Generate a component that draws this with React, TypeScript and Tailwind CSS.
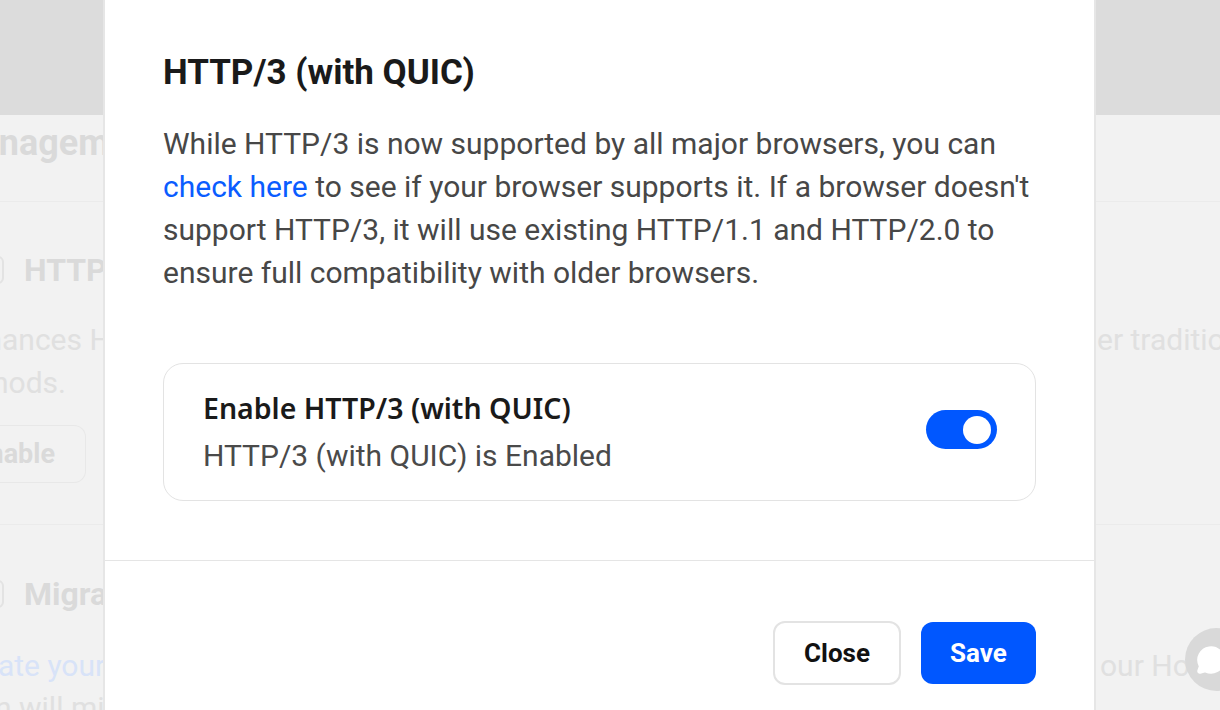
import { MessageCircle } from "lucide-react";

const roboto = "font-['Roboto',sans-serif]";

function BackgroundPage() {
  return (
    <div className={`${roboto} flex flex-col`}>
      <div className="h-[115px] bg-[#dcdcdc]" />
      <div className="h-[87px] border-b border-[#ebebeb] pt-[8px]">
        <div className="-ml-[52px] whitespace-nowrap text-[36px] font-bold leading-[40px] text-[#dadada]">
          Management
        </div>
      </div>

      <div className="border-b border-[#ebebeb] pb-[41px] pt-[48px]">
        <div className="flex h-[40px] items-center gap-[20px]">
          <div className="-ml-[24px] h-[28px] w-[28px] rounded-[6px] border-2 border-[#e3e3e3]" />
          <span className="whitespace-nowrap text-[32px] font-bold text-[#dadada]">HTTP/3</span>
        </div>
        <div className="mt-[28px] flex whitespace-nowrap text-[30px] leading-[43px] text-[#e0e0e0]">
          <span className="-ml-[47px]">enhances HTTP/3</span>
          <span className="ml-auto w-[123px] overflow-hidden">er traditional</span>
        </div>
        <div className="whitespace-nowrap text-[30px] leading-[43px] text-[#e0e0e0]">
          <span className="-ml-[60px] inline-block">methods.</span>
        </div>
        <div className="mt-[21px] flex h-[58px] w-[86px] items-center justify-end rounded-r-[12px] border border-l-0 border-[#e8e8e8] pr-[30px]">
          <span className="whitespace-nowrap text-[27px] font-bold text-[#dadada]">Enable</span>
        </div>
      </div>

      <div className="pt-[49px]">
        <div className="flex h-[40px] items-center gap-[20px]">
          <div className="-ml-[24px] h-[28px] w-[28px] rounded-[6px] border-2 border-[#e3e3e3]" />
          <span className="whitespace-nowrap text-[32px] font-bold text-[#dadada]">Migrate</span>
        </div>
        <div className="mt-[31px] flex whitespace-nowrap text-[30px] leading-[42px] text-[#d8e3f8]">
          <span className="-ml-[62px]">Migrate your site</span>
          <span className="ml-auto w-[120px] overflow-hidden text-[#e0e0e0]">our Hosting</span>
        </div>
        <div className="whitespace-nowrap text-[30px] leading-[42px] text-[#e0e0e0]">
          <span className="-ml-[5px] inline-block">n will migrate</span>
        </div>
      </div>

      <div className="absolute left-[1185px] top-[628px] flex h-[63px] w-[63px] items-center justify-center rounded-full bg-[#d9d9d9]">
        <MessageCircle className="h-[30px] w-[30px] -translate-x-[6px] fill-white text-white" />
      </div>
    </div>
  );
}

function Toggle() {
  return (
    <div className="mb-[5px] flex h-[39px] w-[71px] items-center justify-end rounded-full bg-[#0057ff] pr-[6px]">
      <div className="h-[28px] w-[28px] rounded-full bg-white" />
    </div>
  );
}

function Http3Modal() {
  return (
    <div className="flex h-full w-[993px] flex-col border-x-2 border-[#e6e6e6] bg-white">
      <div className="px-[58px] pb-[59px] pt-[53px]">
        <h2 className={`${roboto} text-[35px] font-bold leading-[40px] text-[#1a1a1a]`}>
          HTTP/3 (with QUIC)
        </h2>
        <p className={`${roboto} mt-[29px] whitespace-nowrap text-[30px] leading-[43px] text-[#474747]`}>
          While HTTP/3 is now supported by all major browsers, you can
          <br />
          <a href="#" className="text-[#0a5cff]">
            check here
          </a>{" "}
          to see if your browser supports it. If a browser doesn't
          <br />
          support HTTP/3, it will use existing HTTP/1.1 and HTTP/2.0 to
          <br />
          ensure full compatibility with older browsers.
        </p>

        <div className="mt-[69px] flex items-center justify-between rounded-[20px] border border-[#e3e3e3] py-[24px] pl-[39px] pr-[38px]">
          <div>
            <div className="font-['Noto_Sans',sans-serif] text-[28.5px] font-semibold leading-[40px] text-[#1a1a1a]">
              Enable HTTP/3 (with QUIC)
            </div>
            <div className={`${roboto} mt-[8px] text-[30px] leading-[40px] text-[#4a4a4a]`}>
              HTTP/3 (with QUIC) is Enabled
            </div>
          </div>
          <Toggle />
        </div>
      </div>

      <div className={`${roboto} flex justify-end gap-5 border-t border-[#e5e5e5] px-[58px] pt-[60px]`}>
        <button
          type="button"
          className="h-[64px] w-[128px] rounded-[12px] border-2 border-[#e3e3e3] bg-white text-[26px] font-bold text-[#111]"
        >
          Close
        </button>
        <button
          type="button"
          className="mt-[1px] h-[62px] w-[115px] rounded-[12px] bg-[#0057ff] text-[26px] font-bold text-white"
        >
          Save
        </button>
      </div>
    </div>
  );
}

export default function App() {
  return (
    <div className="relative h-[710px] w-[1220px] overflow-hidden bg-[#f2f2f2]">
      <BackgroundPage />
      <div className="absolute inset-0 flex pl-[103px]">
        <Http3Modal />
      </div>
    </div>
  );
}
